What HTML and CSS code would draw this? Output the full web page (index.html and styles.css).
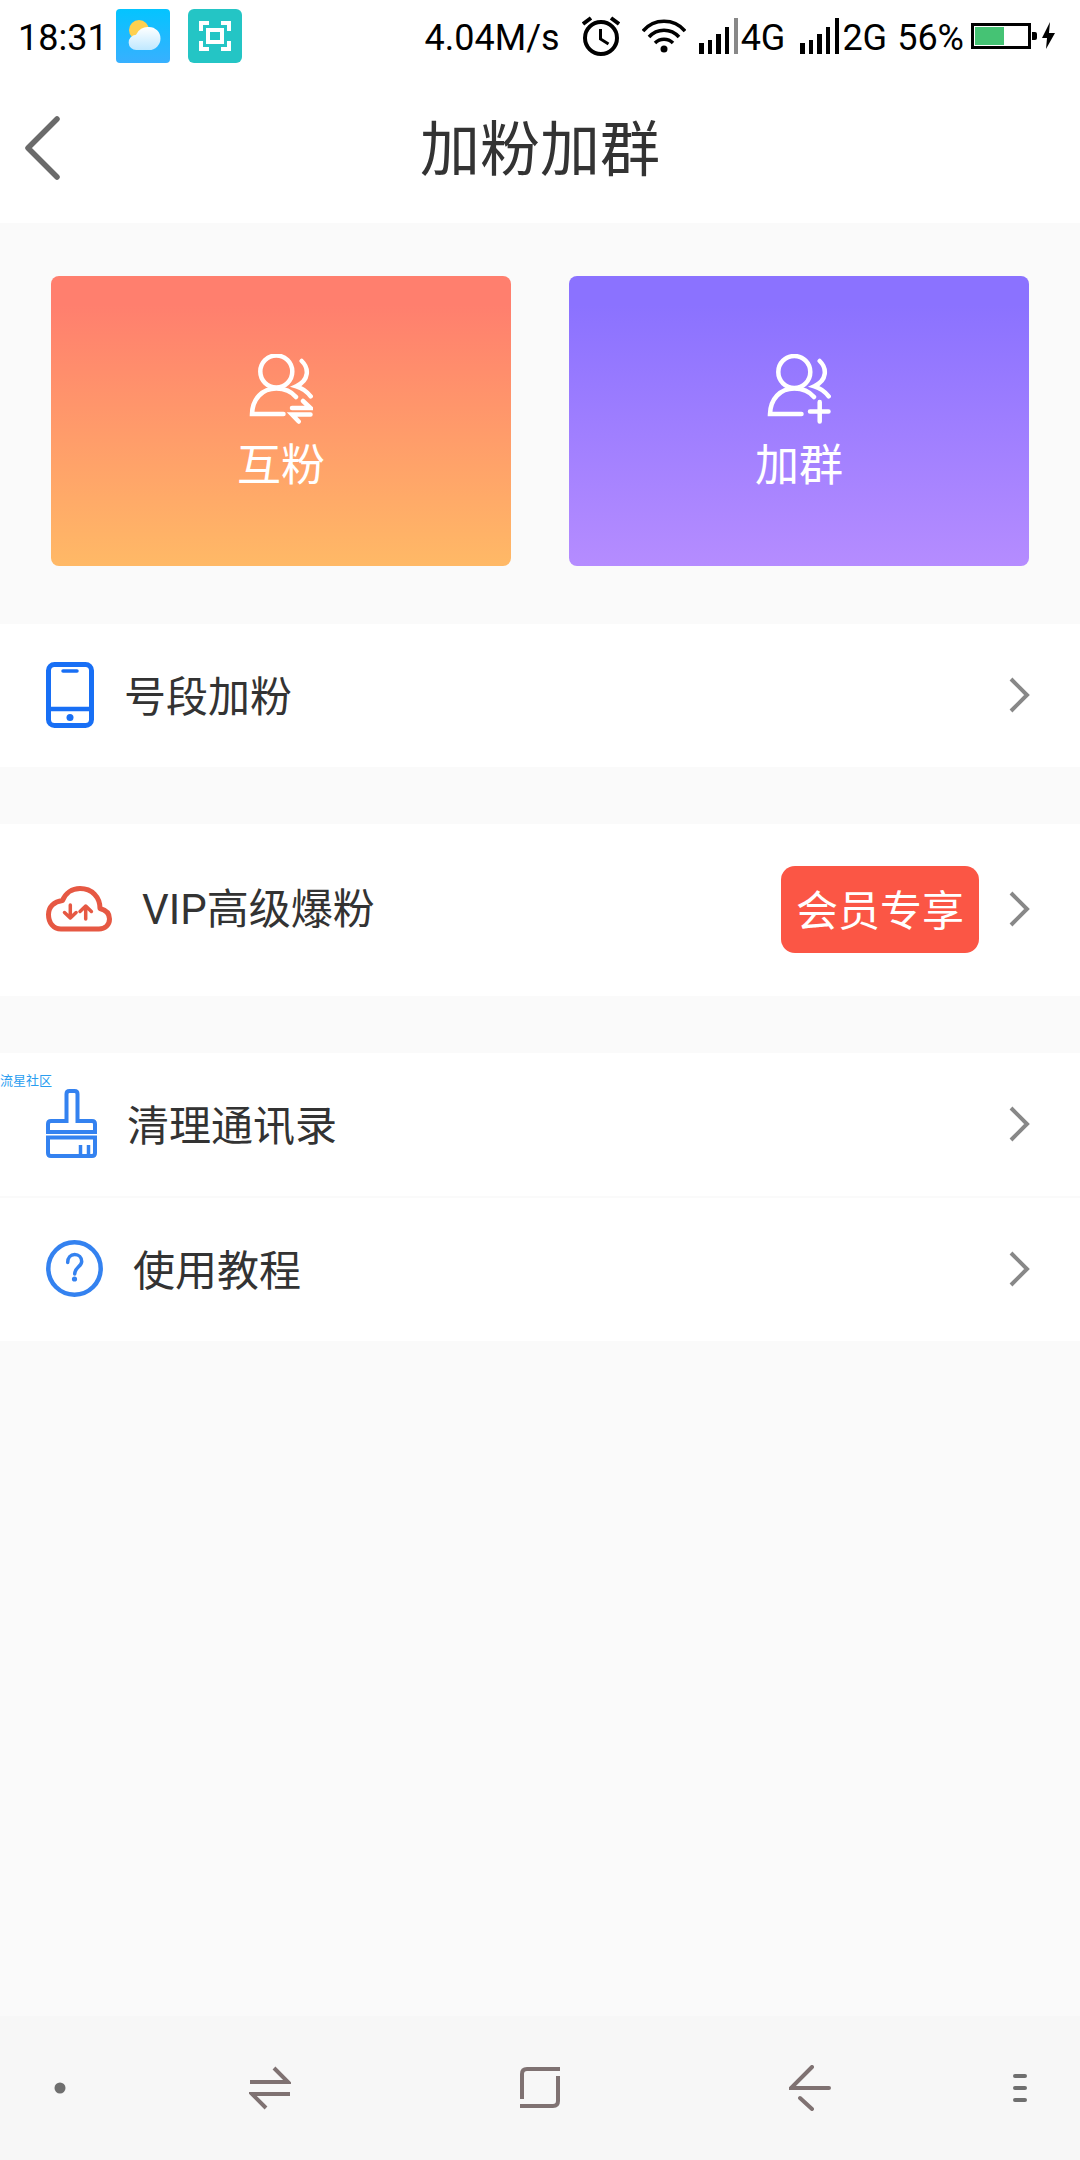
FILE: index.html
```html
<!DOCTYPE html>
<html lang="zh-CN">
<head>
<meta charset="utf-8">
<meta name="viewport" content="width=device-width, initial-scale=1">
<title>加粉加群</title>
<link rel="stylesheet" href="styles.css">
</head>
<body>
<div class="status">
  <div class="status-left">
    <span class="status-text">18:31</span>
    <svg class="app-icon" width="54" height="54" viewBox="0 0 54 54" aria-hidden="true">
      <defs>
        <linearGradient id="sky" x1="0" y1="0" x2="0" y2="1"><stop offset="0" stop-color="#04c4ff"/><stop offset="1" stop-color="#38b0ff"/></linearGradient>
        <linearGradient id="cloud" x1="0" y1="0" x2="0" y2="1"><stop offset="0" stop-color="#ffffff"/><stop offset="1" stop-color="#bfe8ff"/></linearGradient>
      </defs>
      <rect width="54" height="54" rx="4" fill="url(#sky)"/>
      <circle cx="23" cy="21" r="10" fill="#ffd04f"/>
      <path d="M20.500 41a7.500 7.500 0 0 1-.5-15.200A12.500 12.500 0 0 1 33 18a11.500 11.500 0 0 1 0 23z" fill="url(#cloud)"/>
    </svg>
    <svg class="app-icon" width="54" height="54" viewBox="0 0 54 54" aria-hidden="true">
      <rect width="54" height="54" rx="6" fill="#24c5c5"/>
      <path d="M13 22v-8h8M33 14h8v8M41 32v8h-8M21 40h-8v-8" fill="none" stroke="#fff" stroke-width="4"/>
      <rect x="20" y="21" width="14" height="12" fill="none" stroke="#fff" stroke-width="4"/>
    </svg>
  </div>
  <div class="status-right">
    <span class="status-text">4.04M/s</span>
    <svg class="spaced" width="38" height="40" viewBox="0 0 38 40" fill="none" stroke="#000" stroke-width="4" aria-hidden="true">
      <circle cx="19" cy="22" r="16"/><path d="M1 8l8-6M37 8l-8-6" stroke-width="4"/><path d="M18.500 13v10l8 5" stroke-width="3"/>
    </svg>
    <svg class="spaced" width="44" height="34" viewBox="0 0 44 34" fill="none" stroke="#000" stroke-width="3.500" aria-hidden="true">
      <path d="M1 12C12-1 32-1 43 12M7 18c8-9 22-9 30 0M13 24c5-5 13-5 18 0"/><circle cx="22" cy="30" r="3.500" fill="#000" stroke="none"/>
    </svg>
    <span class="networks">
      <span class="network">
        <svg width="39" height="36" viewBox="0 0 39 36" aria-hidden="true"><path d="M0 25h5v11h-5zM9 22h4v14h-4zM17 16h5v20h-5zM26 9h4v27h-4z"/><path d="M35 0h4v36h-4z" fill="#888"/></svg>
        <span class="status-text">4G</span>
      </span>
      <span class="network">
        <svg width="39" height="36" viewBox="0 0 39 36" aria-hidden="true"><path d="M0 25h5v11h-5zM9 22h4v14h-4zM17 16h5v20h-5zM26 9h4v27h-4zM35 0h4v36h-4z"/></svg>
        <span class="status-text">2G</span>
      </span>
    </span>
    <span class="status-text percent">56%</span>
    <svg class="battery" width="85" height="28" viewBox="0 0 85 28" aria-hidden="true">
      <rect x="1.500" y="2.500" width="57" height="23" fill="none" stroke="#000" stroke-width="3"/>
      <rect x="4" y="5" width="29" height="18" fill="#45c374"/>
      <path d="M61 10h3q2 0 2 2v4q0 2-2 2h-3zM79 0L71 16h5l-1 11 9-16h-6z"/>
    </svg>
  </div>
</div>

<header class="title-bar">
  <button class="back" type="button" aria-label="返回">
    <svg width="36" height="64" viewBox="0 0 36 64" fill="none" stroke="#6a6a6a" stroke-width="5.500" stroke-linecap="round" stroke-linejoin="round"><path d="M32 3L3 32l29 29"/></svg>
  </button>
  <h1 class="title">加粉加群</h1>
</header>

<main class="content">
  <div class="cards">
    <button class="card card-orange" type="button">
      <svg width="64" height="70" viewBox="0 0 64 70" fill="none" stroke="#fff" stroke-width="4.500" stroke-linecap="round" aria-hidden="true">
        <circle cx="27.300" cy="17.500" r="16"/>
        <path d="M47 43C42 37 35 34.500 27.300 34.500 13 34.500 3.500 45 3 60h31.500M52.700 7C60 14 60.500 26 47.300 32.300c6 1.700 11 5.700 14.400 10M43 54h18.500L54 47M61.500 60.500H43l6.700 7"/>
      </svg>
      <span>互粉</span>
    </button>
    <button class="card card-purple" type="button">
      <svg width="64" height="70" viewBox="0 0 64 70" fill="none" stroke="#fff" stroke-width="4.500" stroke-linecap="round" aria-hidden="true">
        <circle cx="27.300" cy="18" r="16"/>
        <path d="M47 43C42 37 35 34.500 27.300 34.500 13 34.500 3.500 45 3 60h31.500M52.700 7C60 14 60.500 26 47.300 32.300c6 1.700 11 5.700 14.400 10M43 57.500h18.500M52.700 48v19.500"/>
      </svg>
      <span>加群</span>
    </button>
  </div>

  <nav class="menu">
    <section class="group">
      <a class="row" href="#segment">
        <svg width="48" height="66" viewBox="0 0 48 66" fill="none" stroke="#186ff5" stroke-width="5" aria-hidden="true"><rect x="2.500" y="2.500" width="43" height="61" rx="6"/><path d="M3 47h42" stroke-width="4.500"/><path d="M17 9h14" stroke-width="3.500" stroke-linecap="round"/><circle cx="24" cy="55.500" r="3.500" fill="#186ff5" stroke="none"/></svg>
        <span class="label">号段加粉</span>
        <svg class="chevron" width="21" height="36" viewBox="0 0 21 36"><path d="M2 2l16 16L2 34"/></svg>
      </a>
    </section>
    <section class="group">
      <a class="row row-tall" href="#vip">
        <svg width="66" height="46" viewBox="0 0 66 46" fill="none" stroke="#e65843" stroke-width="5" stroke-linejoin="round" aria-hidden="true"><path d="M15 43C7.500 43 2.500 37 2.500 28.500 2.500 21 8 15.500 16.500 14.500 19.500 7 26 2.500 34 2.500 46 2.500 54 11 54 22.500 60 24 63.500 28 63.500 33 63.500 39 59 43 53 43z"/><path d="M24.300 19v13M18.500 26.500l5.800 5.500 5.800-5.500M39.700 33V20M34 25.500l5.700-5.500 5.700 5.500" stroke-width="3.500" stroke-linecap="round"/></svg>
        <span class="label"><span class="latin">VIP</span>高级爆粉</span>
        <span class="badge">会员专享</span>
        <svg class="chevron" width="21" height="36" viewBox="0 0 21 36"><path d="M2 2l16 16L2 34"/></svg>
      </a>
    </section>
    <section class="group">
      <span class="watermark">流星社区</span>
      <a class="row" href="#clean">
        <svg width="51" height="69" viewBox="0 0 51 69" fill="none" stroke="#3482f0" stroke-width="4" aria-hidden="true"><path d="M20.500 32V5q0-3 3-3h5q3 0 3 3v27H46q3 0 3 3v8H2v-8q0-3 3-3zM2 48.500h47V64q0 3-3 3H5q-3 0-3-3z"/><path d="M34.500 56v10M42.500 56v10" stroke-width="3.500"/></svg>
        <span class="label">清理通讯录</span>
        <svg class="chevron" width="21" height="36" viewBox="0 0 21 36"><path d="M2 2l16 16L2 34"/></svg>
      </a>
      <a class="row" href="#help">
        <svg width="57" height="57" viewBox="0 0 57 57" fill="none" stroke="#3482f0" stroke-width="4.500" aria-hidden="true"><circle cx="28.500" cy="28.500" r="26.200"/><path d="M21.700 22.500c0-5 3-8 7-8s7 3 7 7c0 5-7 6-7 12.500" stroke-width="3.500" stroke-linecap="round"/><circle cx="28.500" cy="39" r="2.600" fill="#3482f0" stroke="none"/></svg>
        <span class="label">使用教程</span>
        <svg class="chevron" width="21" height="36" viewBox="0 0 21 36"><path d="M2 2l16 16L2 34"/></svg>
      </a>
    </section>
  </nav>
</main>

<nav class="system-nav">
  <button class="nav-edge" type="button" aria-label="隐藏"><svg width="12" height="12" viewBox="0 0 12 12"><circle cx="6" cy="6" r="5.500" fill="#6f6f6f"/></svg></button>
  <button type="button" aria-label="最近任务"><svg class="nav-icon" width="42" height="44" viewBox="0 0 42 44"><path d="M1 16h38L25 2M41 28H3l14 14"/></svg></button>
  <button type="button" aria-label="主页"><svg class="nav-icon" width="40" height="42" viewBox="0 0 40 42"><path d="M2 32V7q0-5 5-5h33M38 9v25q0 5-5 5H0"/></svg></button>
  <button type="button" aria-label="后退"><svg class="nav-icon" width="42" height="46" viewBox="0 0 42 46" stroke-linecap="round"><path d="M40 23H2L23 2M11 33l12 11"/></svg></button>
  <button class="nav-edge nav-end" type="button" aria-label="更多"><svg width="14" height="28" viewBox="0 0 14 28" fill="none" stroke="#6f6f6f" stroke-width="4" stroke-linecap="round"><path d="M2 2h10M2 14h10M2 26h10"/></svg></button>
</nav>
</body>
</html>
```

FILE: styles.css
```css
* { box-sizing: border-box; }

body {
  margin: 0;
  min-height: 100vh;
  display: flex;
  flex-direction: column;
  background: #fafafa;
  color: #333;
  font-family: "Noto Sans CJK SC", sans-serif;
  font-size: 42px;
  line-height: 60px;
}

svg { display: block; flex: none; }

button {
  padding: 0;
  border: 0;
  background: none;
  color: inherit;
  font: inherit;
}

/* Phone status bar */
.status {
  height: 72px;
  padding: 0 24px 0 18px;
  display: flex;
  align-items: center;
  justify-content: space-between;
  background: #fff;
  color: #000;
  font-family: Roboto, sans-serif;
  font-size: 36px;
  line-height: 48px;
  white-space: nowrap;
}

.status-text { padding-top: 3px; }
.status-left { display: flex; align-items: center; gap: 18px; }
.status-left .status-text { margin-right: -10px; }
.status-right { display: flex; align-items: center; }
.spaced { margin-left: 22px; }
.networks { display: flex; gap: 15px; margin-left: 13px; }
.network { display: flex; align-items: center; gap: 3px; }
.percent { margin-left: 10px; }
.battery { margin-left: 7px; }

/* Page title */
.title-bar {
  height: 151px;
  padding: 0 25px;
  display: grid;
  grid-template-columns: 1fr auto 1fr;
  align-items: center;
  background: #fff;
}

.title {
  margin: 0;
  padding-bottom: 5px;
  font-size: 60px;
  font-weight: 400;
  line-height: 84px;
}

.content { flex: 1; }

/* Two large entry cards */
.cards {
  padding: 53px 51px 58px;
  display: grid;
  grid-template-columns: 1fr 1fr;
  gap: 58px;
}

.card {
  height: 290px;
  padding-bottom: 2px;
  display: flex;
  flex-direction: column;
  align-items: center;
  justify-content: center;
  gap: 14px;
  border-radius: 8px;
  color: #fff;
  font-size: 44px;
  line-height: 48px;
}

.card-orange { background: linear-gradient(#ff7f6e 10%, #ffb966); }
.card-purple { background: linear-gradient(#8b72ff 10%, #b58cff); }

/* List of entries */
.menu { display: grid; gap: 57px; }

.group {
  position: relative;
  display: grid;
  gap: 2px;
}

.row {
  min-height: 143px;
  padding: 0 50px 2px 46px;
  display: flex;
  align-items: center;
  gap: 30px;
  background: #fff;
  color: inherit;
  text-decoration: none;
}

.row-tall { min-height: 172px; }

.label {
  flex: 1;
  padding-bottom: 2px;
}

.latin { font-family: Roboto, sans-serif; }

.badge {
  padding: 12px 15px 15px;
  border-radius: 14px;
  background: #fb5645;
  color: #fff;
}

.chevron { fill: none; stroke: #888; stroke-width: 4; }

.watermark {
  position: absolute;
  top: 18px;
  left: 0;
  color: #2a9df0;
  font-size: 13px;
  line-height: 18px;
}

/* Phone navigation bar */
.system-nav {
  height: 144px;
  display: grid;
  grid-template-columns: 1fr 2fr 2fr 2fr 1fr;
  background: #f7f7f7;
}

.system-nav button {
  display: flex;
  align-items: center;
  justify-content: center;
}

.system-nav .nav-edge { width: 120px; }
.system-nav .nav-end { justify-self: end; }
.nav-icon { fill: none; stroke: #7f7272; stroke-width: 4; }
```
